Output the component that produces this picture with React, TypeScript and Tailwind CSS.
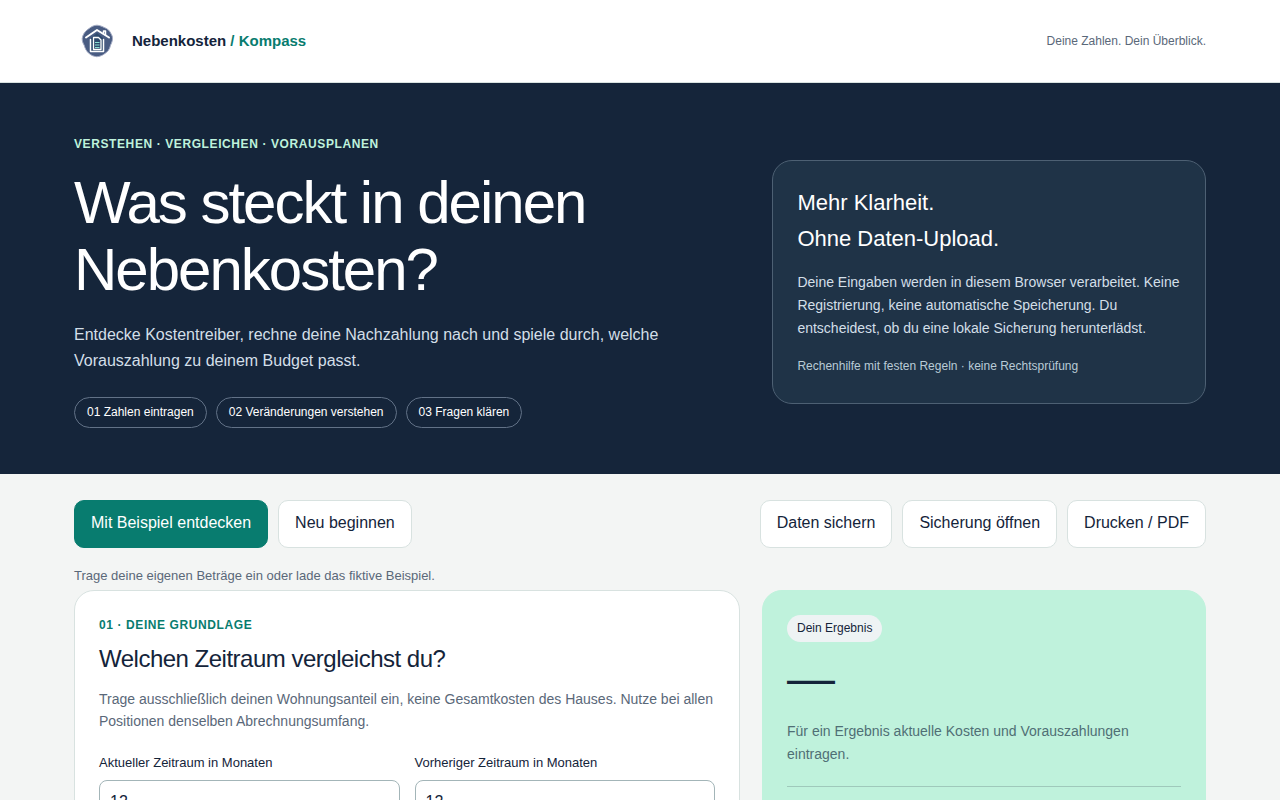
import { useState } from "react";

const steps = ["01 Zahlen eintragen", "02 Veränderungen verstehen", "03 Fragen klären"];
const fileActions = ["Daten sichern", "Sicherung öffnen", "Drucken / PDF"];

function Logo() {
  return (
    <svg viewBox="0 0 46 46" className="size-[46px]" aria-hidden="true">
      <defs>
        <filter id="logo-edge" x="-10%" y="-10%" width="120%" height="120%">
          <feGaussianBlur stdDeviation="0.7" />
        </filter>
      </defs>
      <path
        d="M23 7.2c4 .2 6.2 2 9.5 3.300 3.200 1.800 4.200 4.600 5.700 7.600.9 3.300-.2 6.200-1.700 9.200-.8 4-2.700 6.500-6 8.500-2.400 1.800-4.800 2.800-7.800 2.900-3.200-.3-5.700-1.500-8-3.500-2.400-2.200-3.600-4.600-4.400-7.700-1.800-3.200-2.800-5.800-1.600-9.300 1.200-3.300 3.200-5.500 6-7.400C17.500 8.500 20 7.300 23 7.200z"
        fill="#4a5b82"
        stroke="#a3abc3"
        strokeWidth="1"
        filter="url(#logo-edge)"
      />
      <path d="M17 20l6-5 6 5v13H17z" fill="#2f4a6c" />
      <g fill="none" stroke="#fff" strokeLinecap="round" strokeLinejoin="round">
        <path d="M12 19.500l11-7.500 12 7.500" strokeWidth="2" />
        <path d="M29.500 15v-2h2v4" strokeWidth="1.500" />
        <path d="M16.500 21.500v12h13v-12" strokeWidth="1.500" />
        <path d="M19.500 19.500h5l2.500 2.500v9.500h-7.500z" strokeWidth="1.300" />
      </g>
      <path d="M21 24.500h4.500M21 27h4.500M21 29.500h4.500" stroke="#8be0d2" strokeWidth="1.200" />
    </svg>
  );
}

function MonthField({ id, label }: { id: string; label: string }) {
  const [months, setMonths] = useState("12");
  return (
    <div className="flex flex-col gap-[7px]">
      <label htmlFor={id} className="text-[13px] leading-[21px]">
        {label}
      </label>
      <input
        id={id}
        type="text"
        inputMode="numeric"
        value={months}
        onChange={(e) => setMonths(e.target.value)}
        className="h-11 w-full rounded-lg border border-[#a3b5b8] bg-white px-2.5 text-base"
      />
    </div>
  );
}

export default function App() {
  const buttonBase = "h-12 rounded-[10px] border px-4 pb-0.5 text-base";

  return (
    <div className="min-h-screen bg-[#f3f5f4] font-['Liberation_Sans',Arial,sans-serif] text-[#14243a]">
      {/* Header */}
      <header className="border-b border-[#d8e2e0] bg-white">
        <div className="mx-auto flex max-w-[1180px] items-center justify-between px-6 py-[18px]">
          <a href="#" className="flex items-center gap-3 text-[15px] font-bold">
            <Logo />
            <span>
              Nebenkosten <span className="text-[#087c6f]">/ Kompass</span>
            </span>
          </a>
          <p className="text-xs text-[#5a6879]">Deine Zahlen. Dein Überblick.</p>
        </div>
      </header>

      {/* Hero */}
      <section className="bg-[#15253a] text-white">
        <div className="mx-auto grid max-w-[1180px] items-center gap-12 px-6 pt-13 pb-[46px] md:grid-cols-[1.5fr_1fr]">
          <div>
            <p className="text-xs leading-[19px] font-bold tracking-wider text-[#bff2dc] uppercase">
              Verstehen · Vergleichen · Vorausplanen
            </p>
            <h1 className="mt-[15px] text-[60px] leading-[67px] tracking-[-2px]">
              Was steckt in deinen Nebenkosten?
            </h1>
            <p className="mt-[19px] max-w-[600px] text-base leading-[26px] text-[#d3dfe8]">
              Entdecke Kostentreiber, rechne deine Nachzahlung nach und spiele durch, welche
              Vorauszahlung zu deinem Budget passt.
            </p>
            <ul className="mt-[23px] flex flex-wrap gap-[9px]">
              {steps.map((step) => (
                <li
                  key={step}
                  className="rounded-full border border-[#627287] px-3 py-[5px] text-xs leading-[19px]"
                >
                  {step}
                </li>
              ))}
            </ul>
          </div>

          <aside className="rounded-[20px] border border-[#4d6073] bg-[#1f3347] px-6 pt-6 pb-[27px]">
            <h2 className="text-[22px] leading-9">
              Mehr Klarheit.
              <br />
              Ohne Daten-Upload.
            </h2>
            <p className="mt-3.5 text-sm leading-[23px] text-[#d3dfe8]">
              Deine Eingaben werden in diesem Browser verarbeitet. Keine Registrierung, keine
              automatische Speicherung. Du entscheidest, ob du eine lokale Sicherung herunterlädst.
            </p>
            <p className="mt-[17px] text-xs leading-[19px] text-[#b9cbd6]">
              Rechenhilfe mit festen Regeln · keine Rechtsprüfung
            </p>
          </aside>
        </div>
      </section>

      <main className="mx-auto max-w-[1180px] px-6 pt-[26px] pb-12">
        {/* Toolbar */}
        <div className="flex flex-wrap justify-between gap-2.5">
          <div className="flex flex-wrap gap-2.5">
            <button type="button" className={`${buttonBase} border-[#087c6f] bg-[#087c6f] text-white`}>
              Mit Beispiel entdecken
            </button>
            <button type="button" className={`${buttonBase} border-[#d8e2e0] bg-white`}>
              Neu beginnen
            </button>
          </div>
          <div className="flex flex-wrap gap-2.5">
            {fileActions.map((action) => (
              <button key={action} type="button" className={`${buttonBase} border-[#d8e2e0] bg-white`}>
                {action}
              </button>
            ))}
          </div>
        </div>
        <p className="mt-[17px] mb-1 text-[13px] leading-[21px] text-[#5a6879]">
          Trage deine eigenen Beträge ein oder lade das fiktive Beispiel.
        </p>

        <div className="grid items-start gap-[22px] md:grid-cols-[1.5fr_1fr]">
          {/* Period */}
          <section className="rounded-[20px] border border-[#d8e2e0] bg-white px-6 py-[25px]">
            <p className="text-xs leading-[19px] font-bold tracking-wider text-[#087c6f] uppercase">
              01 · Deine Grundlage
            </p>
            <h2 className="mt-2 text-2xl leading-8 tracking-[-0.5px]">
              Welchen Zeitraum vergleichst du?
            </h2>
            <p className="mt-[13px] text-sm leading-[22px] text-[#5a6879]">
              Trage ausschließlich deinen Wohnungsanteil ein, keine Gesamtkosten des Hauses. Nutze bei
              allen Positionen denselben Abrechnungsumfang.
            </p>
            <div className="mt-5 grid grid-cols-2 gap-[15px]">
              <MonthField id="current-months" label="Aktueller Zeitraum in Monaten" />
              <MonthField id="previous-months" label="Vorheriger Zeitraum in Monaten" />
            </div>
          </section>

          {/* Result */}
          <aside className="rounded-[20px] border border-[#bff2dc] bg-[#bff2dc] px-6 pt-6 pb-12">
            <span className="inline-block rounded-full bg-[#eef3f4] px-2.5 py-1 text-xs leading-[19px]">
              Dein Ergebnis
            </span>
            <p className="mt-4 text-5xl leading-[42px]">—</p>
            <p className="mt-5 text-sm leading-[23px] text-[#4f6f75]">
              Für ein Ergebnis aktuelle Kosten und Vorauszahlungen eintragen.
            </p>
            <hr className="mt-5 border-[#9fc9bb]" />
          </aside>
        </div>
      </main>
    </div>
  );
}
